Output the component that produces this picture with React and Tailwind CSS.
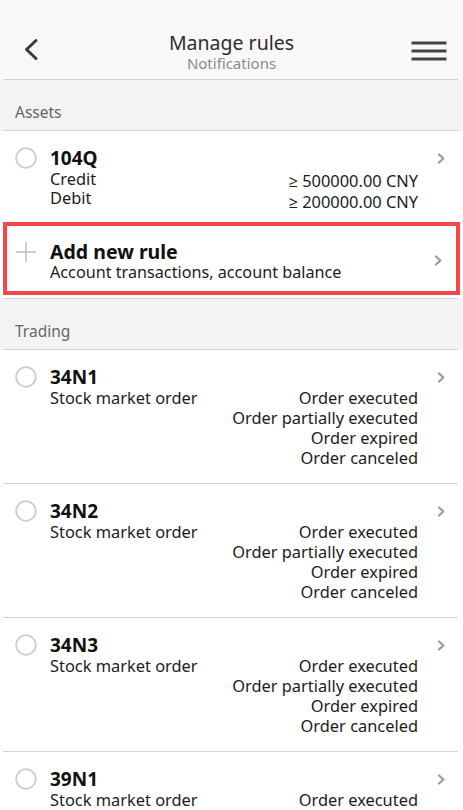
import React from "react";

const FONT = { fontFamily: '"Noto Sans", "Open Sans", sans-serif' };

function Divider() {
  return <div className="h-px bg-[#d3d3d3] ml-[3px] mr-[5px]" />;
}

function Circle() {
  return (
    <svg width="22" height="22" viewBox="0 0 22 22">
      <circle cx="11" cy="11" r="9.8" fill="none" stroke="#cdcdcd" strokeWidth="1.8" />
    </svg>
  );
}

function Chevron() {
  return (
    <svg width="9" height="11" viewBox="0 0 9 11">
      <path d="M2 1.5 L6.3 5.5 L2 9.5" fill="none" stroke="#9b9b9b" strokeWidth="2.2" strokeLinecap="round" strokeLinejoin="round" />
    </svg>
  );
}

function Plus() {
  return (
    <svg width="22" height="22" viewBox="0 0 22 22">
      <path d="M11 1 V21 M1 11 H21" stroke="#bdbdbd" strokeWidth="1.5" />
    </svg>
  );
}

function Section({ title }) {
  return (
    <div className="bg-[#f3f3f3]">
      <div className="h-[50px] pl-[15px] pt-[22px] text-[15.5px] leading-[20px] text-[#666]">{title}</div>
      <Divider />
    </div>
  );
}

function TradingItem({ code }) {
  return (
    <div className="bg-white">
      <div className="flex">
        <div className="w-[50px] flex-none pl-[15px] pt-[16px]">
          <Circle />
        </div>
        <div className="flex-1 pt-[16px] pb-[15px]">
          <div className="text-[19px] leading-[22px] font-bold text-[#111]">{code}</div>
          <div className="flex justify-between text-[16.4px] leading-[20px] text-[#1c1c1c]">
            <div>Stock market order</div>
            <div className="text-right">
              <div>Order executed</div>
              <div>Order partially executed</div>
              <div>Order expired</div>
              <div>Order canceled</div>
            </div>
          </div>
        </div>
        <div className="w-[45px] flex-none pt-[16px]">
          <div className="h-[22px] flex items-center pl-[19px]">
            <Chevron />
          </div>
        </div>
      </div>
      <Divider />
    </div>
  );
}

export default function App() {
  return (
    <div className="w-[463px] bg-white" style={FONT}>
      {/* Header */}
      <div className="bg-[#f8f8f8]">
        <div className="h-[79px] grid grid-cols-[80px_1fr_80px]">
          <div className="pl-[23px] pt-[38px]">
            <svg width="16" height="24" viewBox="0 0 16 24">
              <path d="M13 2.5 L3.5 11.5 L13 20.5" fill="none" stroke="#3a3a3a" strokeWidth="3" strokeLinecap="round" strokeLinejoin="round" />
            </svg>
          </div>
          <div className="flex flex-col items-center pt-[30px]">
            <div className="text-[19.5px] leading-[25px] text-[#2e2e2e]">Manage rules</div>
            <div className="text-[15px] leading-[17px] text-[#8a8a8a]">Notifications</div>
          </div>
          <div className="flex justify-end pr-[16px] pt-[40px]">
            <svg width="36" height="22" viewBox="0 0 36 22">
              <path d="M0.5 3 H35.5 M0.5 11 H35.5 M0.5 19 H35.5" stroke="#444" strokeWidth="3" />
            </svg>
          </div>
        </div>
        <Divider />
      </div>

      <Section title="Assets" />

      {/* 104Q */}
      <div className="flex bg-white">
        <div className="w-[50px] flex-none pl-[15px] pt-[16px]">
          <Circle />
        </div>
        <div className="flex-1 pt-[16px] pb-[10px]">
          <div className="text-[19px] leading-[22px] font-bold text-[#111]">104Q</div>
          <div className="flex justify-between items-start text-[16.4px] text-[#1c1c1c]">
            <div className="leading-[19px]">
              <div>Credit</div>
              <div>Debit</div>
            </div>
            <div className="text-right leading-[21px] pt-[1px]">
              <div>≥ 500000.00 CNY</div>
              <div>≥ 200000.00 CNY</div>
            </div>
          </div>
        </div>
        <div className="w-[45px] flex-none pt-[16px]">
          <div className="h-[22px] flex items-center pl-[19px]">
            <Chevron />
          </div>
        </div>
      </div>

      {/* Add new rule (highlighted) */}
      <div className="mx-[3px] border-[4px] border-[#f4474c] bg-white flex">
        <div className="w-[43px] flex-none pl-[8px] pt-[15px]">
          <Plus />
        </div>
        <div className="flex-1 pt-[15px] pb-[9px]">
          <div className="text-[19.5px] leading-[22px] font-bold text-[#111]">Add new rule</div>
          <div className="text-[16.2px] leading-[19px] text-[#1c1c1c]">Account transactions, account balance</div>
        </div>
        <div className="w-[38px] flex-none flex items-center pl-[16px] pt-[4px]">
          <Chevron />
        </div>
      </div>
      <div className="h-[3px] bg-white" />
      <div className="bg-[#f3f3f3]">
        <Divider />
      </div>

      <Section title="Trading" />

      <TradingItem code="34N1" />
      <TradingItem code="34N2" />
      <TradingItem code="34N3" />
      <TradingItem code="39N1" />
    </div>
  );
}
